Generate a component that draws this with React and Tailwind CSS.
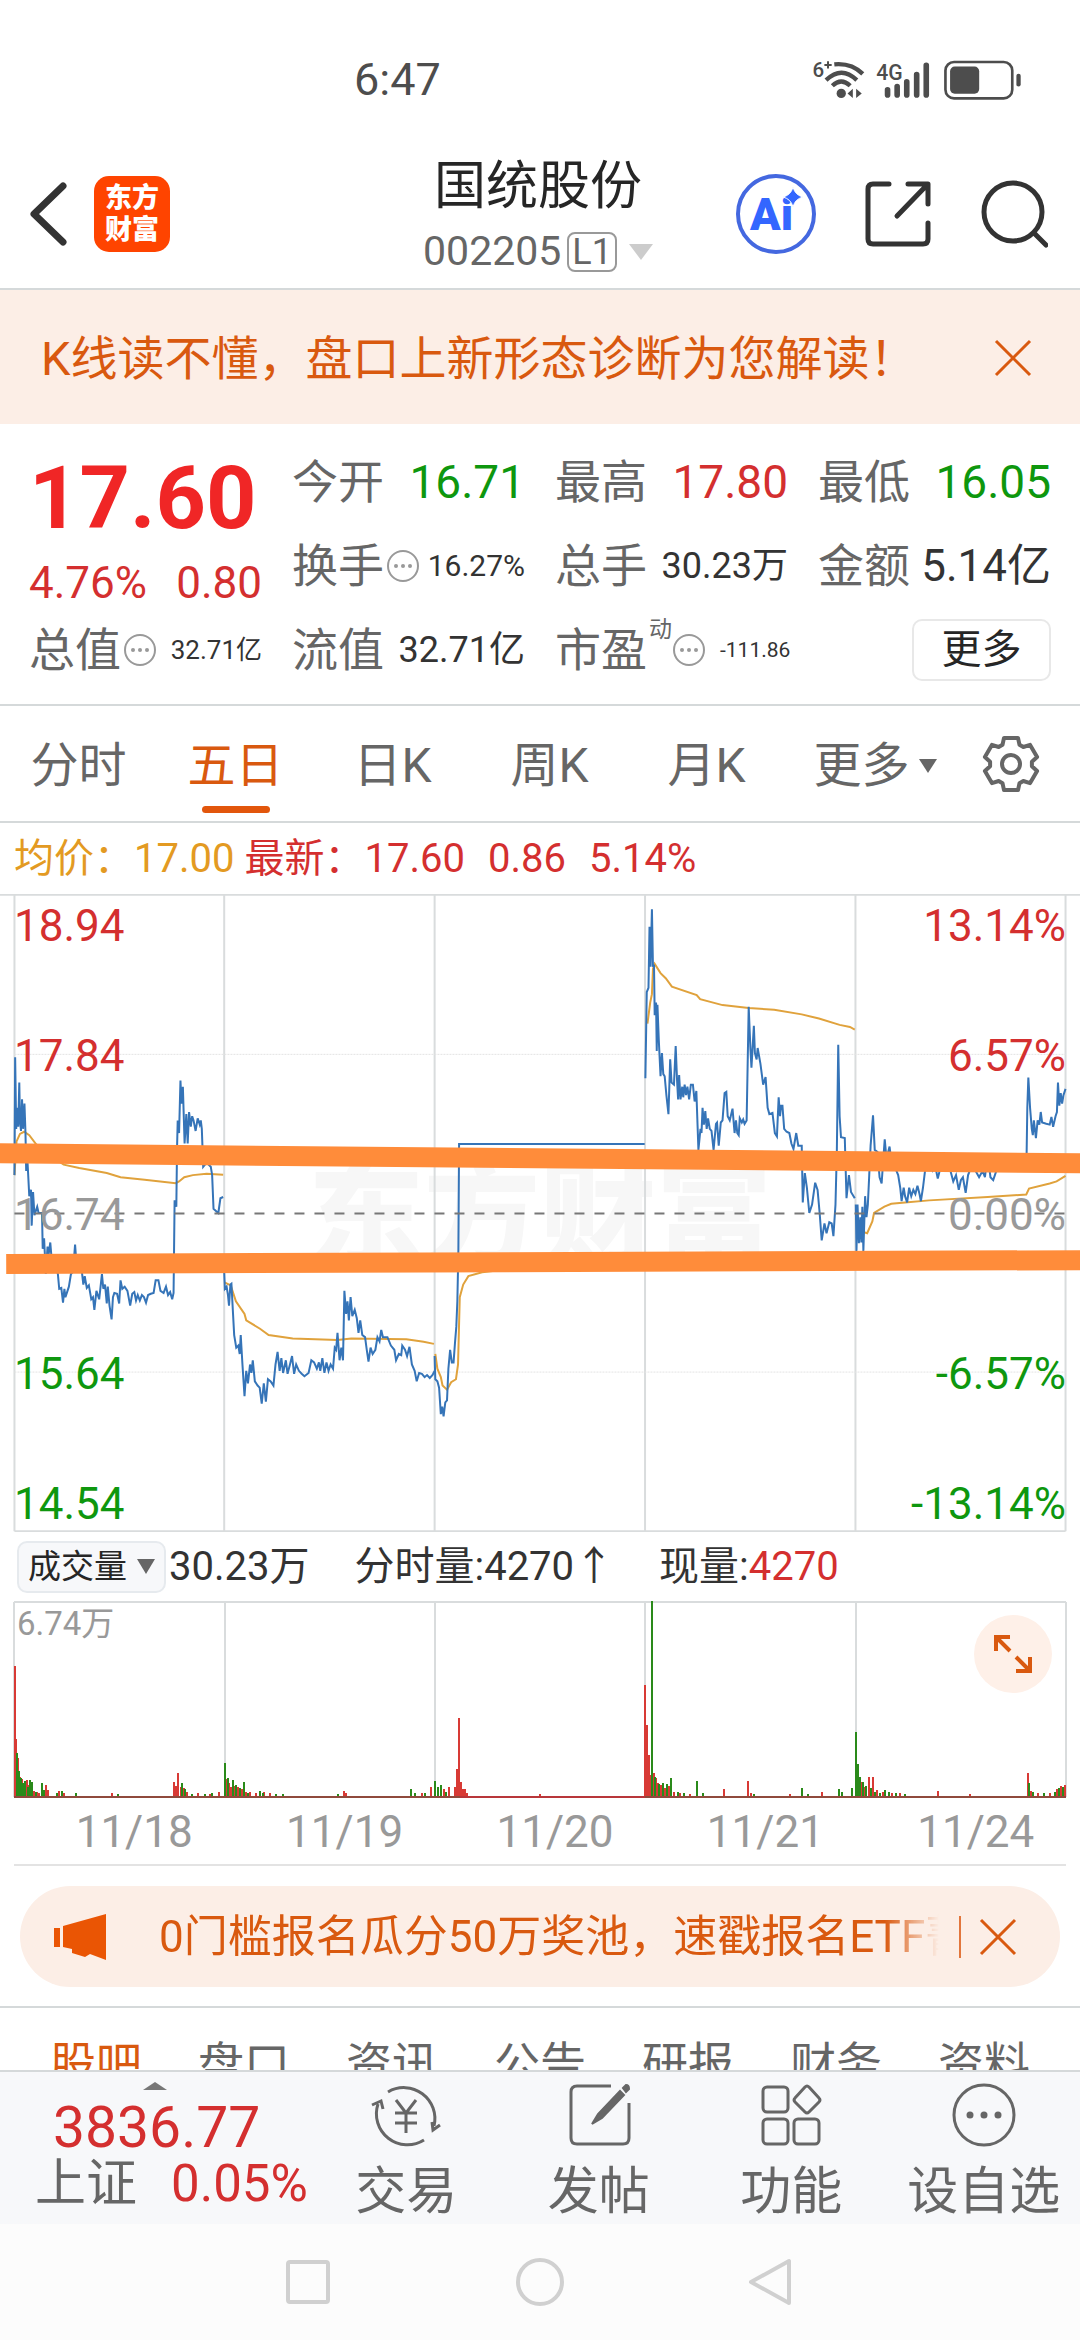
const FONT = "font-['Roboto','Noto_Sans_CJK_SC',sans-serif]";

const quotes = [
  { label: "今开", value: "16.71", cls: "text-[46px] text-[#0e970e]" },
  { label: "最高", value: "17.80", cls: "text-[46px] text-[#d42f2f]" },
  { label: "最低", value: "16.05", cls: "text-[46px] text-[#0e970e]" },
  { label: "换手", value: "16.27%", cls: "text-[30px] text-[#333]", dots: true },
  { label: "总手", value: "30.23万", cls: "text-[36px] text-[#333]" },
  { label: "金额", value: "5.14亿", cls: "text-[44px] text-[#333]" },
  { label: "总值", value: "32.71亿", cls: "text-[26px] text-[#333]", dots: true },
  { label: "流值", value: "32.71亿", cls: "text-[36px] text-[#333]" },
  { label: "市盈", value: "-111.86", cls: "text-[21px] text-[#333]", dots: true, sup: "动" },
];

const periods = ["分时", "五日", "日K", "周K", "月K"];
const dates = ["11/18", "11/19", "11/20", "11/21", "11/24"];
const infoTabs = ["股吧", "盘口", "资讯", "公告", "研报", "财务", "资料"];

const levels = [
  { price: "18.94", pct: "13.14%", top: "top-[10px]", color: "text-[#d42f2f]" },
  { price: "17.84", pct: "6.57%", top: "top-[140px]", color: "text-[#d42f2f]" },
  { price: "16.74", pct: "0.00%", top: "top-[299px]", color: "text-[#999]" },
  { price: "15.64", pct: "-6.57%", top: "top-[458px]", color: "text-[#0e970e]" },
  { price: "14.54", pct: "-13.14%", top: "top-[588px]", color: "text-[#0e970e]" },
];

// price line and average line of the first and the second half of the plot
const priceLeft = [
  "42,700 44,420 47,590 50,540 53,585 56,480 58,570 61,595 64,520 67,590 71,530 74,600 76,690 80,670 85,750 90,735 92,820 96,740 100,795 108,775 112,790 122,790 124,875 128,850 133,935 138,870 141,890 146,860 150,900 160,910 168,935 172,970 178,968 183,1003 187,970 190,990 200,965 206,935 212,930 218,865 222,910 235,910 242,960 246,940 252,968 258,962 265,995 270,990 274,1020 280,975 288,995 296,935 300,970 305,960 310,1005 313,965 318,1010 324,1043 328,990 332,980 340,982 346,1005 350,950 355,970 362,965 370,975 378,1010 384,982 390,978 395,998 400,985 406,998 412,985 418,990 424,1003 430,985 438,982 446,980 452,950 460,950 466,975 475,980 482,965 488,985 494,978 500,995 504,980 507,760 512,775 514,640 516,570 520,600 524,475 527,530 531,490 536,625 541,555 545,625 549,550 554,585 558,560 562,570 568,595 574,565 580,580 583,570 586,590 590,680 600,670 612,680 616,700 620,780 627,785 634,790 640,755 648,752",
  "651,930 653,970 658,965 662,985 665,1010 669,960 672,958 676,1020 680,1080 686,1110 692,1105 696,1125 699,1080 704,1150 710,1225 715,1165 720,1195 726,1150 730,1170 734,1140 740,1190 748,1200 754,1205 760,1243 766,1195 772,1238 778,1185 786,1190 794,1200 800,1150 806,1120 812,1165 817,1135 822,1170 830,1140 835,1172 842,1150 848,1130 854,1172 860,1150 868,1165 876,1172 884,1178 896,1170 904,1140 912,1145 920,1160 926,1145 930,1165 936,1135 942,1170 948,1145 954,1165 960,1150 967,1160 972,1110 976,1115 980,1075 986,1140 991,1110 996,1140 1000,975 1005,1030 1009,1000 1013,1045 1018,990 1023,1035 1030,1020 1036,1040 1041,1075 1046,1045 1052,1080 1060,1085 1065,1115 1070,1143 1076,1110 1082,1125 1090,1115 1096,1085 1102,1095 1107,1068 1112,1085 1125,1085 1135,1105 1145,1115 1150,1140 1158,1125 1165,1128 1168,1105 1176,1115 1182,1130 1189,1108 1196,1150 1204,1165 1210,1190 1217,1170 1225,1172 1233,1180 1240,1175 1248,1182 1256,1175 1262,1165",
  "1262,1130 1264,1185 1270,1190 1275,1205 1280,1268 1284,1250 1288,1273 1293,1240 1298,1235 1302,1160 1307,1115 1312,1145 1317,1145 1321,1100 1325,1060 1328,1000 1331,880 1333,626 1872,626",
];
const priceRight = [
  "306,470 310,265 315,255 318,110 321,205 325,68 328,205 331,200 333,320 337,290 339,405 341,295 345,380 350,465 354,410 358,460 362,465 367,510 373,555 378,425 382,480 389,485 394,393 398,475 401,520 404,462 408,520 413,490 416,515 420,485 424,510 428,490 433,520 438,485 444,485 449,525 454,500 460,640 466,590 469,600 472,540 476,580 480,548 484,590 488,565 493,590 498,595 504,640 511,578 514,575 519,630 525,575 530,570 536,505 541,502 545,560 551,570 559,542 565,600 569,570 573,600 577,605 580,565 586,575 590,568 594,578 600,570 606,300 611,400 614,445 621,345 624,410 629,425 632,398 640,435 648,485 655,467 661,540 666,555 675,552 682,600 688,608 693,515 697,560 700,535 704,535 709,590 716,597 724,600 730,625 736,638 744,600 750,630 760,630 763,765 769,695 775,730 782,790 790,770 799,718 806,735 812,790 818,855 826,815 832,838 840,812 847,815 852,845 858,770 862,640 866,390 870,560 874,610 885,612 890,755 897,700 903,740 914,755",
  "917,770 919,880 922,770 926,862 930,800 933,860 936,775 939,880 944,750 948,800 952,770 956,700 960,630 967,558 972,640 980,645 986,705 992,720 997,660 1001,615 1006,660 1011,645 1015,632 1020,665 1030,680 1040,700 1046,730 1050,762 1056,730 1060,750 1066,765 1072,730 1078,750 1084,735 1090,745 1096,725 1102,745 1106,762 1112,730 1118,690 1130,675 1140,690 1148,680 1155,708 1165,675 1180,680 1192,690 1200,715 1208,700 1216,735 1222,712 1228,705 1236,742 1243,700 1255,675 1265,690 1275,705 1285,690 1292,705 1300,650 1308,705 1316,712 1325,690 1340,670 1370,665 1400,660 1413,650 1415,540 1418,468 1423,540 1428,590 1431,605 1434,570 1440,612 1445,570 1450,580 1454,550 1458,575 1470,578 1480,580 1485,562 1490,585 1497,560 1501,550 1504,480 1508,535 1512,505 1516,530 1520,510 1526,495",
];
const avgLeft = [
  "42,700 48,620 58,602 70,597 85,605 105,627 140,650 185,675 230,683 310,695 350,705 420,711 510,719 520,715 535,705 560,700 600,697 648,699",
  "652,955 670,962 685,1000 710,1030 715,1045 755,1065 780,1080 850,1088 980,1092 1020,1088 1180,1090 1230,1096 1260,1101",
  "1264,1125 1270,1160 1280,1180 1285,1200 1298,1210 1310,1192 1324,1185 1330,1150 1335,990 1345,960 1360,940 1400,931 1568,915 1870,905",
];
const avgRight = [
  "312,340 320,290 325,270 328,210 333,198 350,220 365,232 383,252 455,272 465,282 530,296 606,303 680,307 760,318 810,328 870,343 900,348 914,354",
  "920,830 950,838 965,810 970,790 1000,775 1020,768 1060,765 1130,760 1300,752 1412,746 1420,732 1480,720 1500,715 1526,702",
];

// volume bars: x, height
const redBars = [
  [15, 131], [16, 58], [18, 39], [20, 20], [22, 18], [24, 9], [27, 17], [29, 12], [34, 6], [37, 5], [39, 4], [46, 12], [48, 7], [59, 6], [64, 4], [112, 4],
  [174, 15], [176, 11], [178, 24], [181, 10], [184, 9], [187, 5], [198, 4], [210, 3], [219, 5],
  [227, 18], [229, 14], [231, 10], [235, 11], [238, 10], [242, 8], [246, 5], [250, 5], [256, 4], [264, 5], [270, 4], [344, 6], [346, 4],
  [422, 4], [431, 10], [444, 8], [449, 10], [455, 10], [457, 28], [459, 79], [461, 15], [463, 8], [465, 8], [467, 4], [540, 3],
  [645, 112], [647, 72], [649, 42], [651, 22], [654, 24], [656, 19], [658, 14], [661, 12], [665, 9], [669, 11], [674, 5], [680, 4], [690, 3],
  [724, 8], [748, 16], [751, 4], [790, 3], [822, 5],
  [857, 33], [859, 18], [861, 15], [864, 10], [869, 20], [873, 20], [877, 7], [883, 5], [892, 4], [900, 4], [938, 6], [970, 3],
  [1028, 24], [1031, 6], [1038, 4], [1050, 4], [1057, 8], [1061, 11], [1065, 12],
];
const greenBars = [
  [17, 44], [19, 26], [21, 19], [23, 14], [25, 16], [28, 10], [30, 17], [32, 15], [36, 5], [42, 14], [44, 7], [57, 4], [62, 6], [76, 4], [118, 3],
  [182, 14], [185, 8], [192, 3], [205, 3], [212, 4], [225, 34], [228, 19], [233, 17], [236, 12], [240, 9], [244, 15], [248, 4], [260, 6], [263, 4], [276, 3], [283, 3],
  [338, 3], [411, 8], [415, 4], [425, 4], [435, 16], [438, 10], [441, 12], [446, 5],
  [652, 196], [655, 20], [659, 13], [663, 14], [667, 13], [671, 19], [678, 5], [684, 4], [697, 16], [703, 4], [754, 3], [802, 9], [808, 3], [839, 8], [842, 5], [852, 9],
  [856, 65], [858, 33], [860, 20], [863, 15], [866, 11], [871, 9], [875, 5], [880, 4], [885, 7], [889, 5], [896, 4], [905, 3],
  [1029, 14], [1033, 5], [1044, 4], [1055, 5], [1059, 9], [1063, 10],
];

function bars(list) {
  return list.map(([x, h]) => `M${x} 196V${196 - h}`).join("");
}

function gearPoints() {
  const pts = [];
  for (let i = 0; i < 6; i++) {
    for (const [off, r] of [[-24, 21], [-15, 27], [15, 27], [24, 21]]) {
      const a = ((i * 60 + off - 90) * Math.PI) / 180;
      pts.push(`${(30 + r * Math.cos(a)).toFixed(1)},${(30 + r * Math.sin(a)).toFixed(1)}`);
    }
  }
  return pts.join(" ");
}

function Close() {
  return (
    <svg viewBox="0 0 38 38" className="size-[38px]" fill="none" stroke="currentColor" strokeWidth="3">
      <path d="M2 2L36 36M36 2L2 36" />
    </svg>
  );
}

function Dots() {
  return (
    <svg viewBox="0 0 34 34" className="size-[34px] shrink-0" fill="#999">
      <circle cx="17" cy="17" r="15" fill="none" stroke="#999" strokeWidth="2" />
      <circle cx="10" cy="17" r="2" />
      <circle cx="17" cy="17" r="2" />
      <circle cx="24" cy="17" r="2" />
    </svg>
  );
}

function Quote({ label, value, cls, dots, sup }) {
  return (
    <div className="flex h-[84px] items-center whitespace-nowrap">
      <span className="mr-[2px] text-[46px] text-[#666]">{label}</span>
      {sup && <span className="self-start pt-[10px] text-[23px] text-[#666]">{sup}</span>}
      {dots && <Dots />}
      <span className={`${sup ? "ml-[14px]" : "ml-auto"} ${cls}`}>{value}</span>
    </div>
  );
}

function StatusBar() {
  return (
    <div className="flex h-[144px] items-center pt-[14px] pr-[57px] pl-[354px] text-[#4d4d4d]">
      <span className="text-[45px]">6:47</span>
      <svg viewBox="60 50 636 130" className="ml-auto h-[43px] w-[212px] overflow-visible" fill="none" stroke="currentColor">
        <text x="62" y="108" fontSize="62" fontWeight="500" fill="currentColor" stroke="none">6</text>
        <path d="M98 71h22M109 60v22" strokeWidth="6" />
        <path d="M128 69Q180 64 214 98M103 117Q150 72 196 117M122 134Q149 108 176 134" strokeWidth="13" />
        <circle cx="149" cy="157" r="14" fill="currentColor" stroke="none" />
        <path d="M184 143v28l-16-14zM194 143v28l17-14z" fill="currentColor" stroke="none" />
        <text x="255" y="116" fontSize="64" fontWeight="500" fill="currentColor" stroke="none">4G</text>
        <path d="M289 146v16M318 136v26M347 122v40M377 100v62M406 72v90" strokeWidth="17" strokeLinecap="round" />
        <rect x="464" y="62" width="202" height="110" rx="26" strokeWidth="8" />
        <rect x="478" y="76" width="88" height="82" rx="14" fill="currentColor" stroke="none" />
        <path d="M685 104v26" strokeWidth="13" strokeLinecap="round" />
      </svg>
    </div>
  );
}

function Header() {
  return (
    <header className="grid h-[146px] grid-cols-[1fr_auto_1fr] items-center border-b-2 border-[#d5d9da] pr-[32px] pb-[4px] pl-[28px]">
      <div className="flex items-center gap-[26px]">
        <button aria-label="返回">
          <svg viewBox="0 0 40 66" className="h-[66px] w-[40px]" fill="none" stroke="#333" strokeWidth="7" strokeLinecap="round" strokeLinejoin="round">
            <path d="M35 5L6 33L35 61" />
          </svg>
        </button>
        <div className="flex size-[76px] flex-col items-center justify-center rounded-[15px] bg-[#ff4400] text-[27px] leading-[32px] font-black text-white">
          <span>东方</span>
          <span>财富</span>
        </div>
      </div>
      <div className="flex flex-col items-center gap-[18px] pt-[5px]">
        <h1 className="text-[52px] text-[#262626]">国统股份</h1>
        <button className="flex items-center text-[41px] text-[#666]">
          002205
          <span className="ml-[6px] flex h-[40px] items-center rounded-[8px] border-2 border-[#999] px-[3px] text-[36px]">L1</span>
          <svg viewBox="0 0 24 16" className="ml-[12px] h-[16px] w-[24px]">
            <path d="M0 0h24L12 16z" fill="#ccc" />
          </svg>
        </button>
      </div>
      <div className="flex items-center justify-end gap-[49px]">
        <button aria-label="Ai">
          <svg viewBox="0 0 80 80" className="size-[80px]">
            <circle cx="40" cy="40" r="38" fill="none" stroke="#4468e0" strokeWidth="4" />
            <text x="14" y="56" fontSize="45" fontWeight="900" fill="#3366ff">Ai</text>
            <path d="M57 13q2 8 10 10q-8 2-10 10q-2-8-10-10q8-2 10-10z" fill="#3366ff" stroke="#fff" strokeWidth="1" />
          </svg>
        </button>
        <button aria-label="分享">
          <svg viewBox="0 0 66 68" className="h-[68px] w-[66px]" fill="none" stroke="#333" strokeWidth="5" strokeLinecap="round" strokeLinejoin="round">
            <path d="M24 4H8Q3 4 3 9V59Q3 64 8 64H58Q63 64 63 59V43" />
            <path d="M43 4H63V24M62 5L32 36" />
          </svg>
        </button>
        <button aria-label="搜索">
          <svg viewBox="0 0 68 70" className="h-[70px] w-[68px]" fill="none" stroke="#333" strokeWidth="5" strokeLinecap="round">
            <circle cx="33" cy="33" r="29" />
            <path d="M54 54L66 66" />
          </svg>
        </button>
      </div>
    </header>
  );
}

function PriceChart() {
  const vlines = [42, 651, 1262, 1873, 2484, 3094];
  return (
    <div className="relative h-[638px]">
      <div className="absolute inset-0 flex items-center justify-center pt-[8px] text-[116px] font-black text-[#f7f7f7]">
        东方财富
      </div>
      <svg viewBox="0 32 3136 1516" preserveAspectRatio="none" className="absolute inset-0 size-full [&_*]:[vector-effect:non-scaling-stroke]" fill="none">
        <path d="M0 34H3136M42 1546H3094" stroke="#d9dcdd" strokeWidth="2" />
        <path d={vlines.map((x) => `M${x} 34V1546`).join("")} stroke="#d9dcdd" strokeWidth="2" />
        <path d="M42 413H3094M42 1168H3094" stroke="#e3e3e3" strokeWidth="1" strokeDasharray="2 1" />
        <g stroke="#e0a23c" strokeWidth="2">
          {avgLeft.map((p) => <polyline key={p} points={p} />)}
          <g transform="translate(1568 0)">
            {avgRight.map((p) => <polyline key={p} points={p} />)}
          </g>
        </g>
        <g stroke="#3574b8" strokeWidth="2">
          {priceLeft.map((p) => <polyline key={p} points={p} />)}
          <g transform="translate(1568 0)">
            {priceRight.map((p) => <polyline key={p} points={p} />)}
          </g>
        </g>
        <path d="M42 791H3094" stroke="#777" strokeWidth="2" strokeDasharray="10 10" />
      </svg>
      {levels.map((l) => (
        <div key={l.price} className={`absolute inset-x-[14px] flex justify-between text-[44px] ${l.top} ${l.color}`}>
          <span>{l.price}</span>
          <span>{l.pct}</span>
        </div>
      ))}
      <svg viewBox="0 32 3136 1516" preserveAspectRatio="none" className="absolute inset-0 size-full [&_*]:[vector-effect:non-scaling-stroke]" fill="none">
        <path d="M-10 648L3150 672M18 911L3150 902" stroke="#ff8c3a" strokeWidth="20" />
      </svg>
    </div>
  );
}

function VolumeChart() {
  return (
    <div className="relative h-[198px]">
      <svg viewBox="0 0 1080 198" preserveAspectRatio="none" className="absolute inset-0 size-full" fill="none" strokeWidth="2">
        <path d="M14 1H1066M14 1V196M225 1V196M435 1V196M645 1V196M856 1V196M1066 1V196" stroke="#d9dcdd" />
        <path d={bars(redBars)} stroke="#d83a35" />
        <path d={bars(greenBars)} stroke="#2a8a1a" />
        <path d="M14 196H1066" stroke="#8f4a3c" />
        <path d="M460 196H645" stroke="#b8363a" />
      </svg>
      <span className="absolute top-[6px] left-[17px] text-[33px] text-[#999]">6.74万</span>
      <button aria-label="放大" className="absolute top-[14px] right-[28px] flex size-[78px] items-center justify-center rounded-full bg-[#fef0e8]">
        <svg viewBox="0 0 40 40" className="size-[40px]" fill="none" stroke="#d9590f" strokeWidth="4">
          <path d="M3 17V3H17M3 3L17 17M37 23V37H23M37 37L23 23" />
        </svg>
      </button>
    </div>
  );
}

const actions = [
  {
    label: "交易",
    icon: (
      <g>
        <path d="M18 13A31 31 0 0 1 64 47M54 61A31 31 0 0 1 8 25" />
        <path d="M2 26L11 22L13 30M70 46L63 51L62 43" />
        <path d="M26 21L36 34L46 21M36 34V54M25 34H47M25 44H47" />
      </g>
    ),
  },
  {
    label: "发帖",
    icon: (
      <g>
        <path d="M48 7H14Q8 7 8 13V59Q8 65 14 65H60Q66 65 66 59V24" />
        <path d="M29 45L35 35L57 12L61 16L39 39Z" fill="#666" strokeWidth="2" />
        <path d="M60 9L63 6Q66 6 66 10L63 13Z" fill="#666" strokeWidth="2" />
      </g>
    ),
  },
  {
    label: "功能",
    icon: (
      <g>
        <rect x="8" y="8" width="25" height="25" rx="4" />
        <rect x="8" y="40" width="25" height="25" rx="4" />
        <rect x="39" y="40" width="25" height="25" rx="4" />
        <path d="M50 8Q52 6 54 8L64 19Q66 21 64 23L54 33Q52 35 50 33L40 23Q38 21 40 19Z" />
      </g>
    ),
  },
  {
    label: "设自选",
    icon: (
      <g>
        <circle cx="36" cy="36" r="30" />
        <g fill="#666" stroke="none">
          <circle cx="22" cy="36" r="3.5" />
          <circle cx="36" cy="36" r="3.5" />
          <circle cx="50" cy="36" r="3.5" />
        </g>
      </g>
    ),
  },
];

export default function App() {
  return (
    <div className={`flex min-h-screen flex-col bg-white leading-none ${FONT}`}>
      <StatusBar />
      <Header />

      <div className="flex h-[134px] items-center justify-between bg-[#fceee6] pt-[2px] pr-[48px] pl-[41px] text-[#d9590f]">
        <p className="text-[47px] whitespace-nowrap">K线读不懂，盘口上新形态诊断为您解读！</p>
        <button aria-label="关闭"><Close /></button>
      </div>

      <section className="grid grid-cols-4 gap-x-[30px] border-b-2 border-[#d5d9da] px-[29px] pt-[16px] pb-[12px]">
        <div className="row-span-2 flex flex-col gap-[19px] pt-[14px]">
          <strong className="text-[88px] font-bold text-[#f02626]">17.60</strong>
          <div className="flex justify-between text-[44px] text-[#d42f2f]">
            <span>4.76%</span>
            <span>0.80</span>
          </div>
        </div>
        {quotes.map((q, i) => <Quote key={i} {...q} />)}
        <div className="flex h-[84px] items-center justify-end">
          <button className="h-[62px] w-[139px] rounded-[10px] border-2 border-[#e8e8e8] text-[40px] text-[#262626]">更多</button>
        </div>
      </section>

      <nav className="grid h-[117px] grid-cols-[157fr_157fr_157fr_157fr_157fr_180fr_115fr] border-b-2 border-[#d5d9da] text-[48px] text-[#666]">
        {periods.map((p) => (
          <button key={p} className={`relative pt-1 ${p === "五日" ? "text-[#d9590f]" : ""}`}>
            {p}
            {p === "五日" && <span className="absolute bottom-[8px] left-1/2 h-[7px] w-[68px] -translate-x-1/2 rounded-full bg-[#e2560c]" />}
          </button>
        ))}
        <button className="flex items-center justify-center gap-[9px] pt-1">
          更多
          <svg viewBox="0 0 18 14" className="h-[14px] w-[18px]"><path d="M0 0h18L9 14z" fill="#666" /></svg>
        </button>
        <button aria-label="设置" className="flex items-center">
          <svg viewBox="0 0 60 60" className="ml-[16px] size-[60px]" fill="none" stroke="#666" strokeWidth="4" strokeLinejoin="round">
            <polygon points={gearPoints()} />
            <circle cx="30" cy="30" r="9" />
          </svg>
        </button>
      </nav>

      <div className="flex h-[71px] items-center pl-[14px] text-[40px] whitespace-nowrap text-[#d42f2f]">
        <span className="mr-[10px] text-[#e39a22]">均价：17.00</span>
        <span>最新：17.60</span>
        <span className="ml-[23px]">0.86</span>
        <span className="ml-[23px]">5.14%</span>
      </div>

      <PriceChart />

      <div className="flex h-[69px] items-center pl-[17px] text-[40px] whitespace-nowrap text-[#333]">
        <button className="mr-[3px] flex h-[52px] items-center gap-[10px] rounded-[10px] border-2 border-[#e6eaee] bg-[#f7f8fa] px-[9px] text-[33px] text-[#262626]">
          成交量
          <svg viewBox="0 0 18 15" className="h-[15px] w-[18px]"><path d="M0 0h18L9 15z" fill="#666" /></svg>
        </button>
        <span>30.23万</span>
        <span className="ml-[45px]">分时量:4270↑</span>
        <span className="ml-[45px]">现量:<span className="text-[#d42f2f]">4270</span></span>
      </div>

      <VolumeChart />

      <div className="mx-[14px] grid h-[67px] grid-cols-5 items-center border-b-2 border-[#e3e3e3] text-center text-[44px] text-[#999]">
        {dates.map((d) => <span key={d} className="pl-[30px]">{d}</span>)}
      </div>

      <div className="mx-[20px] mt-[20px] flex h-[101px] items-center rounded-full bg-[#fceee6] pr-[43px] pl-[34px] text-[#d9590f]">
        <svg viewBox="0 0 52 46" className="h-[46px] w-[52px] shrink-0" fill="#ea5504">
          <path d="M0 14h6v19H0zM9 12L52 0V46L36 40L31 43L18 39V35L9 33z" />
        </svg>
        <p className="ml-[53px] flex-1 overflow-hidden py-2 text-[44px] whitespace-nowrap [mask-image:linear-gradient(to_right,black_93%,transparent)]">
          0门槛报名瓜分50万奖池，速戳报名ETF菁英
        </p>
        <span className="mr-[18px] ml-[20px] h-[42px] w-[2px] bg-[#e2763c]" />
        <button aria-label="关闭公告"><Close /></button>
      </div>

      <div className="mt-[19px] grid h-[64px] grid-cols-7 overflow-hidden border-t-2 border-[#d5d9da] px-[22px] pt-[33px] text-[46px] text-[#666]">
        {infoTabs.map((t, i) => (
          <button key={t} className={`h-[46px] ${i === 0 ? "text-[#d9590f]" : ""}`}>{t}</button>
        ))}
      </div>

      <footer className="grid h-[154px] grid-cols-[310fr_770fr] border-t-2 border-[#d5d9da] bg-[#f7f8fa]">
        <button className="flex flex-col items-start pt-[10px] pl-[35px]">
          <svg viewBox="0 0 24 8" className="ml-[108px] h-[8px] w-[24px]"><path d="M0 8L12 0L24 8z" fill="#777" /></svg>
          <span className="mt-[9px] ml-[18px] text-[57px] text-[#d42f2f]">3836.77</span>
          <span className="mt-[2px] flex items-center gap-[34px] text-[51px] text-[#666]">
            上证
            <span className="text-[51px] text-[#d42f2f]">0.05%</span>
          </span>
        </button>
        <div className="grid grid-cols-4">
          {actions.map((a) => (
            <button key={a.label} className="flex flex-col items-center pt-[7px] text-[51px] whitespace-nowrap text-[#666]">
              <svg viewBox="0 0 72 72" className="mb-[15px] size-[72px]" fill="none" stroke="#666" strokeWidth="3">
                {a.icon}
              </svg>
              {a.label}
            </button>
          ))}
        </div>
      </footer>

      <div className="flex flex-1 items-center justify-center gap-[184px] bg-[#fcfcfc]">
        <svg viewBox="0 0 48 48" className="size-[48px]" fill="none" stroke="#d0d0d0" strokeWidth="4">
          <rect x="4" y="4" width="40" height="40" rx="2" />
        </svg>
        <svg viewBox="0 0 48 48" className="size-[48px]" fill="none" stroke="#d0d0d0" strokeWidth="4">
          <circle cx="24" cy="24" r="22" />
        </svg>
        <svg viewBox="0 0 48 48" className="size-[48px]" fill="none" stroke="#d0d0d0" strokeWidth="4" strokeLinejoin="round">
          <path d="M41 3V45L3 24Z" />
        </svg>
      </div>
    </div>
  );
}
